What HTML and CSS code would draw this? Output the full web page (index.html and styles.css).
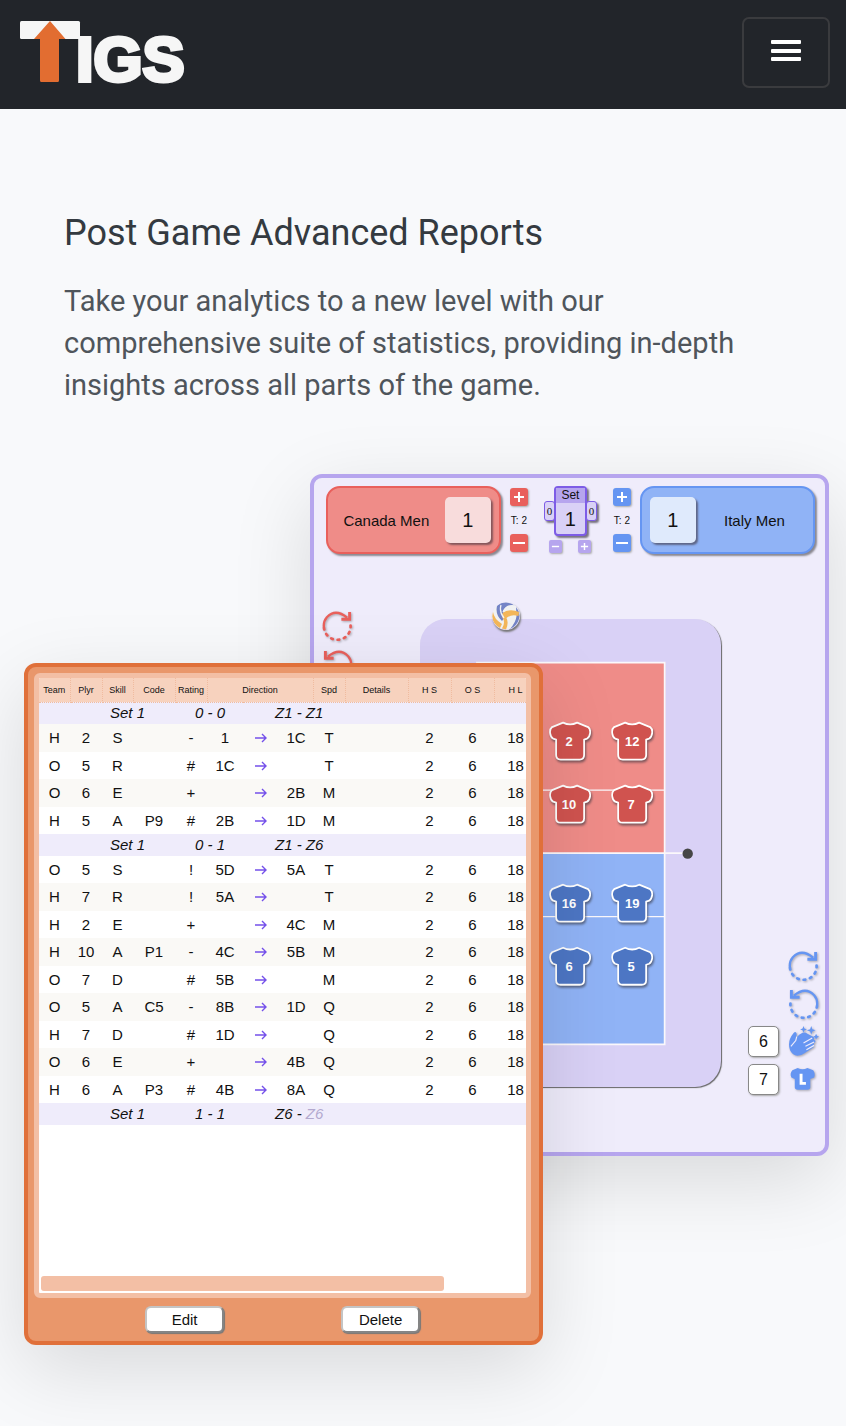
FILE: index.html
```html
<!DOCTYPE html>
<html lang="en">
<head>
<meta charset="utf-8">
<meta name="viewport" content="width=device-width, initial-scale=1">
<title>TIGS</title>
<link rel="stylesheet" href="styles.css">
</head>
<body>
<svg class="defs" aria-hidden="true">
  <symbol id="jersey" viewBox="0 0 42 40">
    <path d="M14 1.500Q21 5 28 1.500L39 6Q41.500 8 41 12Q40.500 16 38 17.500L35 18.500V34Q35 38.500 30.500 38.500H11.500Q7 38.500 7 34V18.500L4 17.500Q1.500 16 1 12Q.5 8 3 6Z" stroke="#fff" stroke-width="1.800" stroke-linejoin="round"/>
  </symbol>
  <symbol id="rotate" viewBox="0 0 32 32">
    <g fill="none" stroke="currentColor" stroke-width="2.200">
      <path d="M2 18A13.500 13.500 0 0 1 5 7.500Q14 -2 26 8" stroke-width="2.400"/>
      <path d="M28.500 2V9.500H20" stroke-width="3"/>
      <path d="M29.500 16A13.500 13.500 0 0 1 2 18" stroke-dasharray="1.800 5" stroke-width="2.800" stroke-linecap="round"/>
    </g>
  </symbol>
  <symbol id="arrow" viewBox="0 0 12 10">
    <path d="M0 5H11M7 1L11 5L7 9" fill="none" stroke="#7450ea" stroke-width="1.400"/>
  </symbol>
</svg>

<header class="topbar">
  <a class="brand" href="#" aria-label="TIGS">
    <svg width="180" height="71" viewBox="0 0 180 71">
      <rect y="4" width="60" height="18" rx="1.500" fill="#f6f6f6"/>
      <path d="M30 4L45.500 22H39V63.500Q39 65 37.500 65H21.500Q20 65 20 63.500V22H14Z" fill="#e26d31"/>
      <text class="brand-text" x="56" y="64">IGS</text>
    </svg>
  </a>
  <button class="menu-button" type="button" aria-label="Menu">
    <svg width="30" height="22" viewBox="0 0 30 22" fill="#fff">
      <rect width="30" height="4" rx="1"/><rect y="9" width="30" height="4" rx="1"/><rect y="17" width="30" height="4" rx="1"/>
    </svg>
  </button>
</header>

<main>
  <section class="intro">
    <h1>Post Game Advanced Reports</h1>
    <p>Take your analytics to a new level with our comprehensive suite of statistics, providing in-depth insights across all parts of the game.</p>
  </section>

  <section class="stage">
    <div class="board">
      <div class="scorebar">
        <div class="team home"><span class="team-name">Canada Men</span><span class="score">1</span></div>
        <div class="timeouts home">
          <button type="button" aria-label="Add timeout"><svg viewBox="0 0 18 18"><path d="M4 9H14M9 4V14"/></svg></button>
          <span>T: 2</span>
          <button type="button" aria-label="Remove timeout"><svg viewBox="0 0 18 18"><path d="M3 9H15"/></svg></button>
        </div>
        <div class="sets">
          <div class="set-row">
            <span class="set-won">0</span>
            <div class="set-box"><span class="set-label">Set</span><span class="set-value">1</span></div>
            <span class="set-won">0</span>
          </div>
          <div class="set-buttons">
            <button type="button" aria-label="Previous set"><svg viewBox="0 0 18 18"><path d="M4 9H14"/></svg></button>
            <button type="button" aria-label="Next set"><svg viewBox="0 0 18 18"><path d="M4 9H14M9 4V14"/></svg></button>
          </div>
        </div>
        <div class="timeouts away">
          <button type="button" aria-label="Add timeout"><svg viewBox="0 0 18 18"><path d="M4 9H14M9 4V14"/></svg></button>
          <span>T: 2</span>
          <button type="button" aria-label="Remove timeout"><svg viewBox="0 0 18 18"><path d="M3 9H15"/></svg></button>
        </div>
        <div class="team away"><span class="score">1</span><span class="team-name">Italy Men</span></div>
      </div>

      <div class="play">
        <div class="rotations">
          <button class="tool" type="button" aria-label="Rotate forward"><svg><use href="#rotate"/></svg></button>
          <button class="tool flip" type="button" aria-label="Rotate back"><svg><use href="#rotate"/></svg></button>
        </div>
        <div class="court">
          <svg class="ball" viewBox="0 0 28 28">
            <circle cx="14" cy="14" r="13.500" fill="#f1f2f2"/>
            <path d="M5 4A13.500 13.500 0 0 1 23 4Q15 2 11 9L13 15L10 19Q3 13 5 4Z" fill="#7484c6"/>
            <path d="M24 5Q29 11 27 17Q25 24 18 27Q24 20 24.500 14Z" fill="#7484c6"/>
            <path d="M10.500 11Q18 6 27 10L26.500 14Q19 12 14.500 16Q17 21 14 27.400L10 26.500Q14 20 10 15Z" fill="#f3b659"/>
            <path d="M1 10Q2 17 10 22L8 26Q-2 20 1 10Z" fill="#f3b659"/>
            <path d="M9 3Q7 10 12 16M23 4Q15 2 11 10" fill="none" stroke="#f1f2f2" stroke-width="1.300"/>
          </svg>
          <svg class="field" viewBox="0 0 301 468">
            <rect x="56" y="43" width="189" height="191" fill="#ef8c88"/>
            <rect x="56" y="234" width="189" height="191" fill="#90b3f6"/>
            <path d="M56 43.500H244.500V425H56M56 234H266" fill="none" stroke="#fbf8fb" stroke-width="1.800"/>
            <path d="M56 171H244M56 297.500H244" fill="none" stroke="#fbf8fb" stroke-width="1.200"/>
            <circle cx="267.500" cy="234.500" r="5.200" fill="#464646"/>
            <g class="players" fill="#d0534f">
              <use href="#jersey" x="129" y="102" width="42" height="40"/><text x="149" y="127">2</text>
              <use href="#jersey" x="191" y="102" width="42" height="40"/><text x="212" y="127">12</text>
              <use href="#jersey" x="129" y="165" width="42" height="40"/><text x="149" y="190">10</text>
              <use href="#jersey" x="191" y="165" width="42" height="40"/><text x="211" y="190">7</text>
            </g>
            <g class="players" fill="#4d76c4">
              <use href="#jersey" x="129" y="264" width="42" height="40"/><text x="149" y="289">16</text>
              <use href="#jersey" x="191" y="264" width="42" height="40"/><text x="212" y="289">19</text>
              <use href="#jersey" x="129" y="327" width="42" height="40"/><text x="149" y="352">6</text>
              <use href="#jersey" x="191" y="327" width="42" height="40"/><text x="211" y="352">5</text>
            </g>
          </svg>
        </div>
        <div class="tools">
          <button class="tool" type="button" aria-label="Rotate forward"><svg><use href="#rotate"/></svg></button>
          <button class="tool flip" type="button" aria-label="Rotate back"><svg><use href="#rotate"/></svg></button>
          <div class="tool-row">
            <span class="count">6</span>
            <button class="tool" type="button" aria-label="Substitutions">
              <svg viewBox="0 0 32 32">
                <g fill="currentColor">
                  <path d="M1 19Q1 13 6 7Q8 5 9 8L8.500 12Q12 8 15 7Q18 6 20 8L26 11Q28 12 26.500 14L28 15Q29 17 26.500 18L27 20Q27 22 24 23.500L17 28Q10 33 5 29Q1 25 1 19Z"/>
                  <path d="M16 0L17 2.500L19.500 3.500L17 4.500L16 7L15 4.500L12.500 3.500L15 2.500ZM24 0L25.200 3.300L28.500 4.500L25.200 5.700L24 9L22.800 5.700L19.500 4.500L22.800 3.300ZM29 8L30 10L32 11L30 12L29 14L28 12L26 11L28 10Z"/>
                </g>
                <path d="M9 11L8 15L3 21M25 12.500L16 17.500M27 16.500L18 21M27 20L19 24.500" fill="none" stroke="#efecfb" stroke-width="1.200"/>
              </svg>
            </button>
          </div>
          <div class="tool-row">
            <span class="count">7</span>
            <button class="tool" type="button" aria-label="Libero">
              <svg viewBox="0 0 32 32">
                <path d="M10 4Q15 7 20 4L26 6.500Q28.500 10 27 14L23 15.500V24Q23 26.500 20 26.500H10Q7 26.500 7 24V15.500L3.500 14Q1.500 10 4.500 6.500Z" fill="currentColor"/>
                <path d="M13.500 10V20H18.500" fill="none" stroke="#fff" stroke-width="3"/>
              </svg>
            </button>
          </div>
        </div>
      </div>
    </div>

    <div class="report">
      <div class="sheet">
        <table>
          <colgroup>
            <col class="c31"><col class="c32"><col class="c31"><col class="c42"><col class="c32"><col class="c36"><col class="c36"><col class="c34"><col class="c32"><col class="c63"><col class="c43"><col class="c43"><col class="c43">
          </colgroup>
          <thead>
            <tr><th>Team</th><th>Plyr</th><th>Skill</th><th>Code</th><th>Rating</th><th colspan="3">Direction</th><th>Spd</th><th>Details</th><th>H S</th><th>O S</th><th>H L</th></tr>
          </thead>
          <tbody>
            <tr class="rally"><td colspan="2"></td><td class="r-set" colspan="2">Set 1</td><td class="r-score" colspan="2">0 - 0</td><td class="r-zone" colspan="7">Z1 - Z1</td></tr>
            <tr><td>H</td><td>2</td><td>S</td><td></td><td>-</td><td>1</td><td><svg class="arrow"><use href="#arrow"/></svg></td><td>1C</td><td>T</td><td></td><td>2</td><td>6</td><td>18</td></tr>
            <tr><td>O</td><td>5</td><td>R</td><td></td><td>#</td><td>1C</td><td><svg class="arrow"><use href="#arrow"/></svg></td><td></td><td>T</td><td></td><td>2</td><td>6</td><td>18</td></tr>
            <tr><td>O</td><td>6</td><td>E</td><td></td><td>+</td><td></td><td><svg class="arrow"><use href="#arrow"/></svg></td><td>2B</td><td>M</td><td></td><td>2</td><td>6</td><td>18</td></tr>
            <tr><td>H</td><td>5</td><td>A</td><td>P9</td><td>#</td><td>2B</td><td><svg class="arrow"><use href="#arrow"/></svg></td><td>1D</td><td>M</td><td></td><td>2</td><td>6</td><td>18</td></tr>
            <tr class="rally"><td colspan="2"></td><td class="r-set" colspan="2">Set 1</td><td class="r-score" colspan="2">0 - 1</td><td class="r-zone" colspan="7">Z1 - Z6</td></tr>
            <tr><td>O</td><td>5</td><td>S</td><td></td><td>!</td><td>5D</td><td><svg class="arrow"><use href="#arrow"/></svg></td><td>5A</td><td>T</td><td></td><td>2</td><td>6</td><td>18</td></tr>
            <tr><td>H</td><td>7</td><td>R</td><td></td><td>!</td><td>5A</td><td><svg class="arrow"><use href="#arrow"/></svg></td><td></td><td>T</td><td></td><td>2</td><td>6</td><td>18</td></tr>
            <tr><td>H</td><td>2</td><td>E</td><td></td><td>+</td><td></td><td><svg class="arrow"><use href="#arrow"/></svg></td><td>4C</td><td>M</td><td></td><td>2</td><td>6</td><td>18</td></tr>
            <tr><td>H</td><td>10</td><td>A</td><td>P1</td><td>-</td><td>4C</td><td><svg class="arrow"><use href="#arrow"/></svg></td><td>5B</td><td>M</td><td></td><td>2</td><td>6</td><td>18</td></tr>
            <tr><td>O</td><td>7</td><td>D</td><td></td><td>#</td><td>5B</td><td><svg class="arrow"><use href="#arrow"/></svg></td><td></td><td>M</td><td></td><td>2</td><td>6</td><td>18</td></tr>
            <tr><td>O</td><td>5</td><td>A</td><td>C5</td><td>-</td><td>8B</td><td><svg class="arrow"><use href="#arrow"/></svg></td><td>1D</td><td>Q</td><td></td><td>2</td><td>6</td><td>18</td></tr>
            <tr><td>H</td><td>7</td><td>D</td><td></td><td>#</td><td>1D</td><td><svg class="arrow"><use href="#arrow"/></svg></td><td></td><td>Q</td><td></td><td>2</td><td>6</td><td>18</td></tr>
            <tr><td>O</td><td>6</td><td>E</td><td></td><td>+</td><td></td><td><svg class="arrow"><use href="#arrow"/></svg></td><td>4B</td><td>Q</td><td></td><td>2</td><td>6</td><td>18</td></tr>
            <tr><td>H</td><td>6</td><td>A</td><td>P3</td><td>#</td><td>4B</td><td><svg class="arrow"><use href="#arrow"/></svg></td><td>8A</td><td>Q</td><td></td><td>2</td><td>6</td><td>18</td></tr>
            <tr class="rally"><td colspan="2"></td><td class="r-set" colspan="2">Set 1</td><td class="r-score" colspan="2">1 - 1</td><td class="r-zone" colspan="7">Z6 - <span class="fading">Z6</span></td></tr>
          </tbody>
        </table>
        <div class="scroll-thumb"></div>
      </div>
      <div class="actions">
        <button type="button">Edit</button>
        <button type="button">Delete</button>
      </div>
    </div>
  </section>
</main>
</body>
</html>
```

FILE: styles.css
```css
* {
  box-sizing: border-box;
}

body {
  margin: 0;
  background: #f8f9fb;
  font-family: Roboto, "Liberation Sans", sans-serif;
  color: #343a40;
}

button {
  font: inherit;
  padding: 0;
  border: 0;
  cursor: pointer;
}

.defs {
  display: none;
}

/* Top bar */
.topbar {
  display: flex;
  align-items: center;
  justify-content: space-between;
  padding: 17px 16px 21px 20px;
  background: #22252a;
}

.brand,
.brand svg {
  display: block;
}

.brand-text {
  font: bold 63px "Liberation Sans", Arial, sans-serif;
  fill: #f6f6f6;
  stroke: #f6f6f6;
  stroke-width: 4px;
}

.menu-button {
  display: grid;
  place-items: center;
  width: 88px;
  height: 71px;
  padding-bottom: 3px;
  border: 2px solid #3a3b3e;
  border-radius: 7px;
  background: none;
}

/* Intro */
.intro {
  padding: 102px 64px 0;
}

h1 {
  margin: 0 0 25px;
  font-size: 36px;
  font-weight: 400;
  line-height: 44px;
}

.intro p {
  margin: 0;
  font-size: 29px;
  line-height: 42px;
  color: #4f555b;
}

/* Overlapping panels */
.stage {
  display: grid;
  padding: 68px 17px 81px 24px;
  font-family: "Liberation Sans", Arial, sans-serif;
  color: #111;
  overflow: hidden;
}

.board,
.report {
  grid-area: 1 / 1;
  width: 64.5%;
  border-radius: 12px;
  box-shadow: 0 24px 80px rgba(0, 0, 0, 0.13);
}

.board {
  justify-self: end;
  align-self: start;
  border: 4px solid #b6a5ee;
  background: #efecfb;
}

/* Score bar */
.scorebar {
  display: flex;
  gap: 9px;
  padding: 8px 10px 0 12px;
}

.team {
  display: flex;
  flex: 1;
  align-items: center;
  height: 68px;
  border: 2px solid;
  border-radius: 14px;
  box-shadow: 2px 2px 2px #8a8890;
  font-size: 15px;
}

.team.home {
  padding-right: 8px;
  background: #ef8c88;
  border-color: #e9605c;
}

.team.away {
  padding-left: 8px;
  background: #90b3f6;
  border-color: #6595f2;
}

.team-name {
  flex: 1;
  text-align: center;
  white-space: nowrap;
}

.score {
  display: grid;
  place-items: center;
  width: 46px;
  height: 46px;
  border-radius: 5px;
  font-size: 20px;
  box-shadow: 2px 2px 2px rgba(60, 50, 60, 0.6);
}

.home .score {
  background: #f8dcdc;
}

.away .score {
  background: #dfeafc;
}

.timeouts {
  display: flex;
  flex-direction: column;
  align-items: center;
  justify-content: space-between;
  width: 18px;
  height: 68px;
  padding: 2px 0;
  font-size: 10px;
  white-space: nowrap;
}

.scorebar button {
  display: block;
  width: 18px;
  height: 18px;
  border-radius: 3px;
  box-shadow: 1px 1px 2px #aaa;
}

.scorebar button svg {
  display: block;
  fill: none;
  stroke: #fff;
  stroke-width: 2;
}

.timeouts.home button {
  background: #e9605c;
}

.timeouts.away button {
  background: #6595f2;
}

.sets {
  margin: 0 7px;
}

.set-row {
  display: flex;
  align-items: center;
}

.set-box {
  display: flex;
  flex-direction: column;
  width: 33px;
  height: 50px;
  margin: 0 -1px;
  border: 2px solid #7d5ce6;
  border-radius: 4px;
  background: #d9d1f6;
  box-shadow: 2px 2px 2px #77727f;
  text-align: center;
}

.set-label {
  background: #b6a5ee;
  font-size: 12px;
  line-height: 15px;
}

.set-value {
  font-size: 20px;
  line-height: 32px;
}

.set-won {
  width: 11px;
  height: 20px;
  border: 1px solid #7d5ce6;
  border-radius: 3px;
  background: #d9d1f6;
  box-shadow: 2px 2px 2px #77727f;
  font: 11px/18px "Liberation Serif", serif;
  text-align: center;
}

.set-buttons {
  display: flex;
  justify-content: space-between;
  padding: 4px 6px 0 5px;
}

.scorebar .set-buttons button {
  width: 13px;
  height: 13px;
  border-radius: 2px;
  background: #b6a5ee;
}

/* Court */
.play {
  display: grid;
  grid-template-columns: 106px 1fr 104px;
  padding-top: 48px;
}

.rotations {
  display: flex;
  flex-direction: column;
  gap: 8px;
  padding: 8px;
  color: #e9605c;
}

.tool {
  display: block;
  width: 31px;
  height: 31px;
  background: none;
  color: inherit;
  filter: drop-shadow(1px 1px 1px rgba(0, 0, 0, 0.3));
}

.tool svg {
  display: block;
  width: 31px;
  height: 31px;
}

.flip svg {
  transform: scaleX(-1);
}

.court {
  position: relative;
  padding: 17px 0 65px;
}

.field {
  display: block;
  width: 100%;
  border-radius: 26px;
  background: #d9d1f6;
  box-shadow: 1px 1px 1px #666;
}

.ball {
  position: absolute;
  top: 0;
  left: 24%;
  width: 28px;
  height: 28px;
  border-radius: 50%;
  box-shadow: 1px 2px 2px #777;
}

.players use {
  filter: drop-shadow(1px 2px 1px rgba(50, 50, 60, 0.6));
}

.players text {
  font-size: 13px;
  font-weight: bold;
  fill: #fff;
  text-anchor: middle;
}

.tools {
  display: flex;
  flex-direction: column;
  align-items: flex-end;
  justify-content: flex-end;
  gap: 7px;
  padding: 0 6px 57px 0;
  color: #6595f2;
}

.tool-row {
  display: flex;
  align-items: center;
  gap: 9px;
}

.count {
  width: 31px;
  height: 31px;
  border: 1px solid #888;
  border-radius: 5px;
  background: #fff;
  box-shadow: 1px 1px 2px #aaa;
  color: #111;
  font-size: 16px;
  line-height: 29px;
  text-align: center;
}

/* Report */
.report {
  z-index: 1;
  margin-top: 189px;
  padding: 6px 8px 0 6px;
  border: 4px solid #e0703a;
  background: #e9976b;
}

.sheet {
  display: flex;
  flex-direction: column;
  min-height: 625px;
  border: 5px solid #f3bfa5;
  border-radius: 6px;
  background: #fff;
  overflow: hidden;
}

table {
  width: 498px;
  border-collapse: collapse;
  table-layout: fixed;
  font-size: 15px;
}

.c31 { width: 31px; }
.c32 { width: 32px; }
.c34 { width: 34px; }
.c36 { width: 36px; }
.c42 { width: 42px; }
.c43 { width: 43px; }
.c63 { width: 63px; }

th {
  height: 24px;
  padding: 0;
  border-right: 1px dotted #f0bb9f;
  border-bottom: 1px dotted #f0bb9f;
  background: #f7d2be;
  font-size: 9px;
  font-weight: 400;
}

td {
  height: 27px;
  padding: 0;
  line-height: 20px;
  text-align: center;
  white-space: nowrap;
}

tbody tr:nth-child(even) {
  background: #faf9f6;
}

tbody tr:nth-child(even) td {
  height: 28px;
}

tbody tr.rally {
  background: #efecfb;
  font-style: italic;
}

tbody tr.rally td {
  height: 22px;
  text-align: left;
}

tbody .r-set {
  padding-left: 8px;
}

tbody .r-score {
  padding-left: 20px;
}

tbody .r-zone {
  padding-left: 32px;
}

.fading {
  color: #b3a9cf;
}

.arrow {
  display: block;
  width: 12px;
  height: 10px;
  margin: 0 auto;
}

.scroll-thumb {
  width: 403px;
  height: 15px;
  margin: auto 0 2px 2px;
  border-radius: 3px;
  background: #f3bfa5;
}

.actions {
  display: flex;
  justify-content: center;
  gap: 117px;
  padding: 8px 0;
}

.actions button {
  width: 79px;
  height: 27px;
  border: 2px solid;
  border-color: #c4c4c4 #858585 #858585 #c4c4c4;
  border-radius: 6px;
  background: #fff;
  box-shadow: 1px 1px 1px #777;
  color: #111;
  font-size: 15px;
}
```
